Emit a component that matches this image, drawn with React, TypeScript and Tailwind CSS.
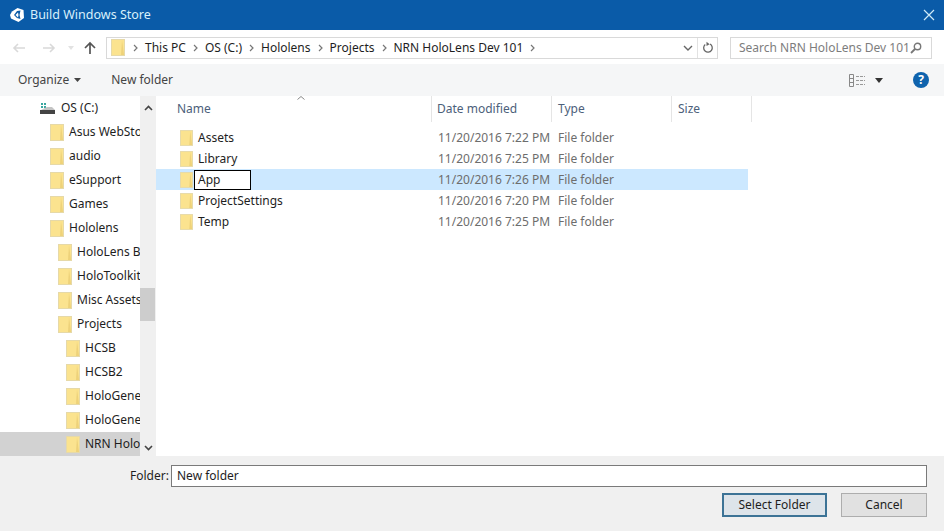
import React from "react";

const Folder = ({ className = "" }: { className?: string }) => (
  <svg width="14" height="17" viewBox="0 0 14 17" className={`shrink-0 ${className}`}>
    <rect x="0.5" y="0.5" width="13" height="16" fill="#fbe38f" stroke="#e6d9a8" />
    <path d="M11 1 L13 16 L10 16 Z" fill="#eed27a" />
  </svg>
);

const tree: [string, number, boolean?][] = [
  ["Asus WebSto", 50],
  ["audio", 50],
  ["eSupport", 50],
  ["Games", 50],
  ["Hololens", 50],
  ["HoloLens B", 58],
  ["HoloToolkit", 58],
  ["Misc Assets", 58],
  ["Projects", 58],
  ["HCSB", 66],
  ["HCSB2", 66],
  ["HoloGene", 66],
  ["HoloGene", 66],
  ["NRN Holo", 66, true],
];

const files = [
  ["Assets", "11/20/2016 7:22 PM"],
  ["Library", "11/20/2016 7:25 PM"],
  ["App", "11/20/2016 7:26 PM"],
  ["ProjectSettings", "11/20/2016 7:20 PM"],
  ["Temp", "11/20/2016 7:25 PM"],
];

const Sep = () => (
  <svg width="5" height="8" viewBox="0 0 5 8" className="shrink-0 mx-[7px]">
    <path d="M1 1 L4 4 L1 7" fill="none" stroke="#777" strokeWidth="1.2" />
  </svg>
);

export default function App() {
  return (
    <div className="w-[944px] h-[531px] overflow-hidden flex flex-col bg-white text-[12px] text-[#1e1e1e] font-['Noto_Sans','Open_Sans',sans-serif]">
      {/* Title bar */}
      <div className="h-[30px] bg-[#0a5ba8] flex items-center text-[#d8f0fb] shrink-0">
        <svg width="16" height="16" viewBox="0 0 16 16" className="ml-[9px] mr-[5px]">
          <path d="M8.5 1 L14.5 3 L15 11 L9.5 15 L2 11.5 L1 8 L3 4.5 Z" fill="#fff" />
          <path d="M8 4 L11.5 3.5 L10.5 8 L11.5 12 L8 11 L5 8 Z" fill="#0a5ba8" />
          <path d="M9 5.5 L9.5 8 L9 10.5 L6.5 8 Z" fill="#fff" />
        </svg>
        <span className="text-[12.5px] leading-none">Build Windows Store</span>
        <svg width="12" height="12" viewBox="0 0 12 12" className="ml-auto mr-[9px]">
          <path d="M1 1 L11 11 M11 1 L1 11" stroke="#cfeaf7" strokeWidth="1.2" />
        </svg>
      </div>

      {/* Address row */}
      <div className="h-[34px] shrink-0 flex items-center bg-white pt-px">
        <div className="w-[106px] flex items-center shrink-0">
          <svg width="14" height="12" viewBox="0 0 14 12" className="ml-[12px]">
            <path d="M13 6 H2 M6 2 L2 6 L6 10" fill="none" stroke="#d9d9d9" strokeWidth="1.6" />
          </svg>
          <svg width="14" height="12" viewBox="0 0 14 12" className="ml-[16px]">
            <path d="M1 6 H12 M8 2 L12 6 L8 10" fill="none" stroke="#d9d9d9" strokeWidth="1.6" />
          </svg>
          <svg width="6" height="4" viewBox="0 0 6 4" className="ml-[12px]">
            <path d="M0 0 H6 L3 4 Z" fill="#e2e2e2" />
          </svg>
          <svg width="14" height="14" viewBox="0 0 14 14" className="ml-[9px]">
            <path d="M7 13 V2 M2 7 L7 2 L12 7" fill="none" stroke="#555" strokeWidth="1.7" />
          </svg>
        </div>
        <div className="w-[612px] h-[22px] border border-[#d9d9d9] flex items-center shrink-0">
          <Folder className="ml-[4px] mr-[1px]" />
          <Sep />
          <span>This PC</span>
          <Sep />
          <span>OS (C:)</span>
          <Sep />
          <span>Hololens</span>
          <Sep />
          <span>Projects</span>
          <Sep />
          <span>NRN HoloLens Dev 101</span>
          <Sep />
          <svg width="10" height="6" viewBox="0 0 10 6" className="ml-auto mr-[4px]">
            <path d="M1 1 L5 5 L9 1" fill="none" stroke="#666" strokeWidth="1.4" />
          </svg>
          <div className="w-[20px] h-full border-l border-[#e2e2e2] flex items-center justify-center">
            <svg width="12" height="13" viewBox="0 0 12 13">
              <path d="M3.2 3.5 A4.3 4.3 0 1 0 8 3" fill="none" stroke="#666" strokeWidth="1.3" />
              <path d="M4.5 0.8 L7.6 3.2 L4.5 5 Z" fill="#666" />
            </svg>
          </div>
        </div>
        <div className="ml-[12px] w-[202px] h-[22px] border border-[#d9d9d9] flex items-center pl-[8px] text-[#7d7d7d] shrink-0">
          <span>Search NRN HoloLens Dev 101</span>
          <svg width="12" height="12" viewBox="0 0 12 12" className="ml-auto mr-[9px]">
            <circle cx="7.5" cy="4.5" r="3.2" fill="none" stroke="#777" strokeWidth="1.4" />
            <path d="M5 7 L1 11" stroke="#777" strokeWidth="1.8" />
          </svg>
        </div>
      </div>

      {/* Toolbar */}
      <div className="h-[32px] shrink-0 bg-[#f5f6f7] flex items-center text-[#444]">
        <span className="ml-[18px]">Organize</span>
        <svg width="7" height="4" viewBox="0 0 7 4" className="ml-[5px]">
          <path d="M0 0 H7 L3.5 4 Z" fill="#444" />
        </svg>
        <span className="ml-[30px]">New folder</span>
        <svg width="17" height="13" viewBox="0 0 17 13" className="ml-auto">
          <path d="M0.5 0.5 H4.5 V12.5 H0.5 Z M0.5 4.5 H4.5 M0.5 8.5 H4.5" fill="none" stroke="#888" />
          <path d="M7 2.5 H16 M7 6.5 H16 M7 10.5 H16" stroke="#999" strokeDasharray="3 1" />
        </svg>
        <svg width="8" height="5" viewBox="0 0 8 5" className="ml-[9px]">
          <path d="M0 0 H8 L4 5 Z" fill="#333" />
        </svg>
        <div className="ml-[30px] mr-[15px] w-[16px] h-[16px] rounded-full bg-[#0f63ad] text-white text-[12px] font-bold flex items-center justify-center leading-none">
          ?
        </div>
      </div>

      {/* Main */}
      <div className="flex-1 flex min-h-0">
        <div className="w-[140px] shrink-0 flex flex-col overflow-hidden">
          <div className="h-[24px] shrink-0 flex items-center">
            <svg width="15" height="12" viewBox="0 0 15 12" className="ml-[40px] mr-[6px]">
              <path d="M1 1 H3 V3 H1 Z M4 1 H6 V3 H4 Z M1 4 H3 V6 H1 Z M4 4 H6 V6 H4 Z" fill="#3aa7a0" />
              <path d="M7 5 H12 L15 8 H1 Z" fill="#c4c4c4" />
              <rect x="0" y="8" width="15" height="4" fill="#444" />
            </svg>
            <span>OS (C:)</span>
          </div>
          {tree.map(([name, left, sel], i) => (
            <div key={i} className={`h-[24px] shrink-0 flex items-center whitespace-nowrap overflow-hidden ${sel ? "bg-[#d2d2d2]" : ""}`}>
              <Folder className="mr-[5px] ml-[var(--l)]" />
              <span style={{ marginLeft: 0 }}>{name}</span>
            </div>
          )).map((el, i) => React.cloneElement(el, { style: { paddingLeft: tree[i][1] } }))}
        </div>
        <div className="w-[16px] shrink-0 bg-[#f0f0f0] flex flex-col items-center relative">
          <svg width="9" height="6" viewBox="0 0 9 6" className="mt-[9px]">
            <path d="M1 5 L4.5 1.5 L8 5" fill="none" stroke="#444" strokeWidth="1.6" />
          </svg>
          <div className="absolute top-[192px] left-0 w-[15px] h-[33px] bg-[#cdcdcd]" />
          <svg width="9" height="6" viewBox="0 0 9 6" className="mt-auto mb-[5px]">
            <path d="M1 1 L4.5 4.5 L8 1" fill="none" stroke="#444" strokeWidth="1.6" />
          </svg>
        </div>
        <div className="flex-1 min-w-0 relative">
          <div className="flex h-[26px] text-[#4c607a] items-center">
            <div className="w-[276px] h-full flex items-center pl-[21px] border-r border-[#e5e5e5] relative">
              Name
              <svg width="8" height="4" viewBox="0 0 8 4" className="absolute left-[141px] top-0">
                <path d="M0.5 3.5 L4 0.5 L7.5 3.5" fill="none" stroke="#888" />
              </svg>
            </div>
            <div className="w-[120px] h-full flex items-center pl-[5px] border-r border-[#e5e5e5]">Date modified</div>
            <div className="w-[120px] h-full flex items-center pl-[6px] border-r border-[#e5e5e5]">Type</div>
            <div className="w-[80px] h-full flex items-center pl-[6px] border-r border-[#e5e5e5]">Size</div>
          </div>
          <div className="pt-[5px]">
            {files.map(([name, date]) => {
              const sel = name === "App";
              return (
                <div key={name} className={`h-[21px] w-[592px] flex items-center text-[#6d6d6d] ${sel ? "bg-[#cce8ff]" : ""}`}>
                  <div className="w-[282px] flex items-center pl-[24px] shrink-0">
                    <Folder className="w-[13px] h-[16px]" />
                    {sel ? (
                      <div className="ml-[1px] w-[57px] h-[20px] border border-black bg-white text-[#1e1e1e] pl-[3px] flex items-center">
                        {name}
                      </div>
                    ) : (
                      <span className="ml-[5px] text-[#1e1e1e]">{name}</span>
                    )}
                  </div>
                  <div className="w-[120px] shrink-0 whitespace-nowrap">{date}</div>
                  <div className="shrink-0">File folder</div>
                </div>
              );
            })}
          </div>
        </div>
      </div>

      {/* Bottom */}
      <div className="h-[75px] shrink-0 bg-[#f0f0f0] flex flex-col">
        <div className="flex items-center h-[22px] mt-[9px]">
          <span className="ml-[130px] w-[41px]">Folder:</span>
          <div className="w-[756px] h-[22px] border border-[#7a7a7a] bg-white flex items-center pl-[5px]">New folder</div>
        </div>
        <div className="flex justify-end mt-[6px] pr-[17px]">
          <button className="w-[105px] h-[24px] border-2 border-[#3c7396] bg-[#dde4ea] text-[#1e1e1e] flex items-center justify-center">
            Select Folder
          </button>
          <button className="ml-[14px] w-[86px] h-[24px] border border-[#adadad] bg-[#e1e1e1] text-[#1e1e1e] flex items-center justify-center">
            Cancel
          </button>
        </div>
      </div>
    </div>
  );
}
